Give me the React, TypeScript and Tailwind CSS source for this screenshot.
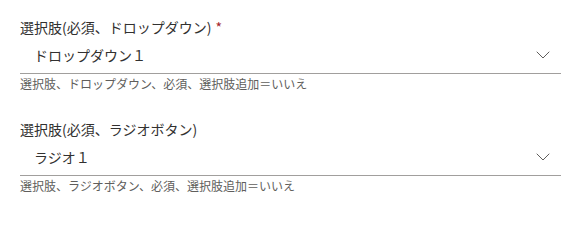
import { ChevronDown } from 'lucide-react';

type FieldProps = {
  label: string;
  required?: boolean;
  value: string;
  hint: string;
};

function ChoiceField({ label, required, value, hint }: FieldProps) {
  return (
    <div className="flex flex-col">
      <label className="h-[20px] text-[14px] leading-[20px] text-[#323130]">
        {label}
        {required && <span className="pl-[4px] text-[#a4262c]">*</span>}
      </label>
      <div className="flex h-[37px] items-center justify-between border-b border-[#a19f9d] pl-[14px] pr-[6px]">
        <span className="text-[14px] leading-[20px] text-[#323130]">{value}</span>
        <ChevronDown className="h-[24px] w-[24px] text-[#605e5c]" strokeWidth={1} />
      </div>
      <p className="mt-[2px] text-[12px] leading-[16px] text-[#605e5c]">{hint}</p>
    </div>
  );
}

export default function App() {
  return (
    <div
      className="flex w-[575px] flex-col gap-[27px] bg-white pl-[20px] pr-[14px] pt-[17px]"
      style={{ fontFamily: '"Noto Sans CJK JP", "Noto Sans", sans-serif' }}
    >
      <ChoiceField
        label="選択肢(必須、ドロップダウン)"
        required
        value="ドロップダウン１"
        hint="選択肢、ドロップダウン、必須、選択肢追加＝いいえ"
      />
      <ChoiceField
        label="選択肢(必須、ラジオボタン)"
        value="ラジオ１"
        hint="選択肢、ラジオボタン、必須、選択肢追加＝いいえ"
      />
    </div>
  );
}
